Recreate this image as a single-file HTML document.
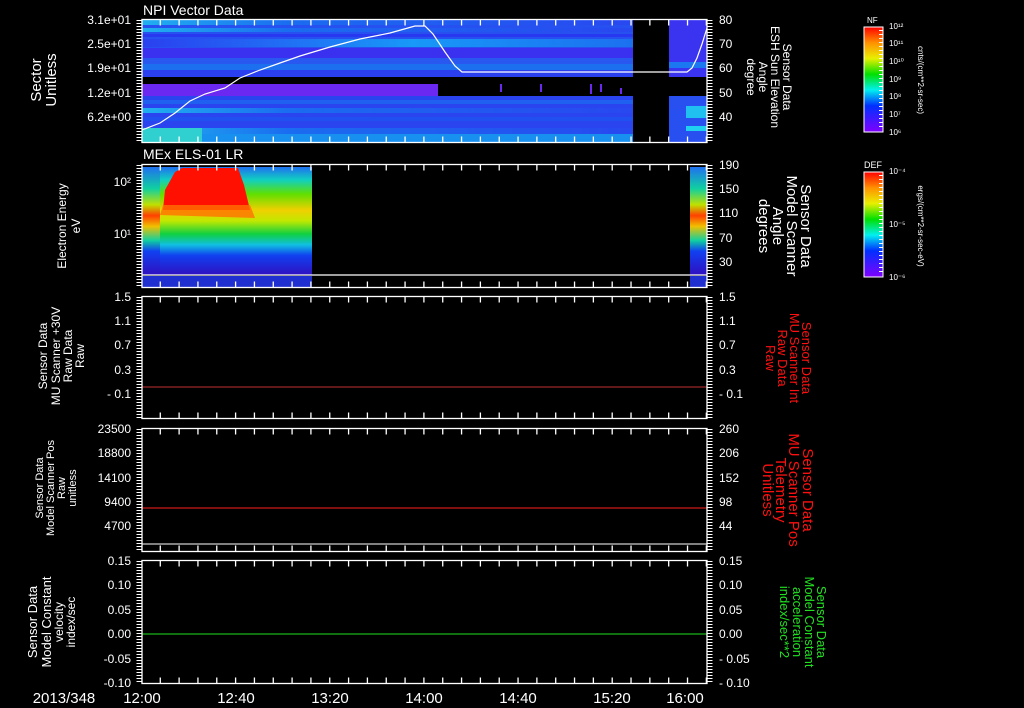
<!DOCTYPE html>
<html><head><meta charset="utf-8"><style>
html,body{margin:0;padding:0;background:#000;width:1024px;height:708px;overflow:hidden}
svg{display:block}
text{font-family:"Liberation Sans",sans-serif;fill:#fff}
</style></head><body>
<svg width="1024" height="708" viewBox="0 0 1024 708" xmlns="http://www.w3.org/2000/svg">
<defs>
<linearGradient id="rb" x1="0" y1="0" x2="0" y2="1">
<stop offset="0" stop-color="#ff0000"/><stop offset="0.15" stop-color="#ff9000"/><stop offset="0.3" stop-color="#e8f000"/><stop offset="0.45" stop-color="#00e000"/><stop offset="0.6" stop-color="#00f0f0"/><stop offset="0.75" stop-color="#0030ff"/><stop offset="1" stop-color="#8000ff"/>
</linearGradient>
<linearGradient id="p1a" x1="0" y1="0" x2="1" y2="0">
<stop offset="0" stop-color="#20b0f0"/><stop offset="0.3" stop-color="#1a6cf0"/><stop offset="1" stop-color="#2848f0"/>
</linearGradient>
<linearGradient id="p1c" x1="0" y1="0" x2="1" y2="0">
<stop offset="0" stop-color="#2a40f0"/><stop offset="0.55" stop-color="#1898f8"/><stop offset="1" stop-color="#1c70f0"/>
</linearGradient>
<linearGradient id="p2" x1="0" y1="0" x2="0" y2="1">
<stop offset="0" stop-color="#2070f0"/><stop offset="0.12" stop-color="#10d0c0"/><stop offset="0.25" stop-color="#60e000"/><stop offset="0.4" stop-color="#f0d000"/><stop offset="0.5" stop-color="#c0e800"/><stop offset="0.62" stop-color="#10d040"/><stop offset="0.72" stop-color="#10c0e0"/><stop offset="0.82" stop-color="#1040f0"/><stop offset="1" stop-color="#3010c0"/>
</linearGradient>
<linearGradient id="p2r" x1="0" y1="0" x2="0" y2="1">
<stop offset="0" stop-color="#2070f0"/><stop offset="0.2" stop-color="#10d0a0"/><stop offset="0.35" stop-color="#c0e000"/><stop offset="0.45" stop-color="#ff4000"/><stop offset="0.55" stop-color="#f0c000"/><stop offset="0.68" stop-color="#10d0a0"/><stop offset="0.78" stop-color="#1040f0"/><stop offset="1" stop-color="#3010c0"/>
</linearGradient>
</defs>

<!-- Panel 1 data -->
<g>
<rect x="142" y="20" width="491" height="57" fill="#2650f0"/>
<rect x="142" y="20" width="491" height="5" fill="url(#p1a)"/>
<rect x="142" y="28" width="491" height="4" fill="url(#p1a)"/>
<rect x="142" y="34" width="491" height="3" fill="#2838f0"/>
<rect x="142" y="39" width="491" height="8" fill="url(#p1c)"/>
<rect x="142" y="48" width="491" height="10" fill="#3a30f0"/>
<rect x="142" y="58" width="491" height="6" fill="#2858f0"/>
<rect x="142" y="64" width="491" height="6" fill="#1c70f0"/>
<rect x="142" y="70" width="491" height="7" fill="#2a40f0"/>
<rect x="142" y="84" width="296" height="12" fill="#6a28f0"/>
<rect x="142" y="96" width="491" height="46" fill="#2a44f0"/>
<rect x="142" y="100" width="491" height="4" fill="#2060f0"/>
<rect x="142" y="108" width="491" height="5" fill="url(#p1a)"/>
<rect x="142" y="117" width="491" height="4" fill="#2050f0"/>
<rect x="142" y="128" width="491" height="6" fill="url(#p1a)"/>
<rect x="142" y="134" width="491" height="8" fill="#1890f0"/>
<rect x="142" y="128" width="60" height="14" fill="#30d0d0"/>
<g fill="#6a28f0"><rect x="500" y="84" width="2" height="8"/><rect x="540" y="84" width="2" height="8"/><rect x="590" y="84" width="2" height="10"/><rect x="600" y="84" width="2" height="8"/><rect x="620" y="88" width="2" height="6"/></g>
<rect x="669" y="20" width="38" height="57" fill="#3a34f0"/>
<rect x="669" y="62" width="38" height="6" fill="#1c78f0"/>
<rect x="669" y="96" width="38" height="46" fill="#2850f0"/>
<rect x="686" y="106" width="21" height="12" fill="#20c0f0"/>
<rect x="686" y="126" width="21" height="5" fill="#20d0f0"/>
<polyline fill="none" stroke="#fff" stroke-width="1.2" points="142,130 160,123 175,113 190,101 205,94 225,88 240,78 260,70 280,63 300,56 330,47 360,39 390,33 415,26 425,26 433,34 445,52 455,66 462,72 687,72 692,68 697,58 702,44 707,28"/>
</g>

<!-- Panel 2 data -->
<rect x="142" y="167" width="170" height="108" fill="url(#p2)"/>
<rect x="142" y="167" width="18" height="108" fill="url(#p2r)"/>
<path d="M163,210 L165,190 L175,172 L182,168 L238,168 L244,185 L250,210 Z" fill="#ff1000"/>
<path d="M160,215 L163,205 L250,205 L255,218 Z" fill="#ff7000" opacity="0.8"/>
<rect x="142" y="276" width="170" height="11" fill="#2030d0"/>
<rect x="690" y="167" width="17" height="108" fill="url(#p2r)"/>
<rect x="690" y="276" width="17" height="11" fill="#2030d0"/>
<line x1="142" y1="275" x2="707" y2="275" stroke="#fff" stroke-width="1.2"/>

<!-- data lines -->
<line x1="142" y1="387" x2="707" y2="387" stroke="#c03030" stroke-width="1"/>
<line x1="142" y1="508" x2="707" y2="508" stroke="#ff2020" stroke-width="1"/>
<line x1="142" y1="634" x2="707" y2="634" stroke="#20e020" stroke-width="1"/>
<line x1="142" y1="544" x2="707" y2="544" stroke="#fff" stroke-width="1"/>

<!-- frames -->
<g fill="none" stroke="#fff" stroke-width="1.3">
<rect x="142" y="19.5" width="565" height="123"/>
<rect x="142" y="164.5" width="565" height="123"/>
<rect x="142" y="296.5" width="565" height="122"/>
<rect x="142" y="428.5" width="565" height="123"/>
<rect x="142" y="560.5" width="565" height="123"/>
</g>
<!-- time ticks -->
<g stroke="#fff" stroke-width="1.3" stroke-dasharray="1.3 17.53" stroke-dashoffset="0.6">
<line x1="141.4" y1="22.5" x2="707.5" y2="22.5" stroke-width="6"/><line x1="141.4" y1="139.5" x2="707.5" y2="139.5" stroke-width="6"/>
<line x1="141.4" y1="167.5" x2="707.5" y2="167.5" stroke-width="6"/><line x1="141.4" y1="284.5" x2="707.5" y2="284.5" stroke-width="6"/>
<line x1="141.4" y1="299.5" x2="707.5" y2="299.5" stroke-width="6"/><line x1="141.4" y1="415.5" x2="707.5" y2="415.5" stroke-width="6"/>
<line x1="141.4" y1="431.5" x2="707.5" y2="431.5" stroke-width="6"/><line x1="141.4" y1="548.5" x2="707.5" y2="548.5" stroke-width="6"/>
<line x1="141.4" y1="563.5" x2="707.5" y2="563.5" stroke-width="6"/><line x1="141.4" y1="680.5" x2="707.5" y2="680.5" stroke-width="6"/>
</g>
<!-- y minor ticks -->
<g stroke="#fff" stroke-width="5" stroke-dasharray="1 2">
<line x1="139" y1="20" x2="139" y2="142"/><line x1="710" y1="20" x2="710" y2="142"/>
<line x1="139" y1="165" x2="139" y2="287"/><line x1="710" y1="165" x2="710" y2="287"/>
<line x1="139" y1="297" x2="139" y2="418"/><line x1="710" y1="297" x2="710" y2="418"/>
<line x1="139" y1="429" x2="139" y2="551"/><line x1="710" y1="429" x2="710" y2="551"/>
<line x1="139" y1="561" x2="139" y2="683"/><line x1="710" y1="561" x2="710" y2="683"/>
</g>

<!-- titles -->
<text x="143" y="15" font-size="14">NPI Vector Data</text>
<text x="143" y="159" font-size="14">MEx ELS-01 LR</text>

<!-- left tick labels -->
<g font-size="12" text-anchor="end">
<text x="131" y="24">3.1e+01</text><text x="131" y="48">2.5e+01</text><text x="131" y="72">1.9e+01</text><text x="131" y="97">1.2e+01</text><text x="131" y="121">6.2e+00</text>
<text x="131" y="186">10²</text><text x="131" y="238">10¹</text>
<text x="131" y="301">1.5</text><text x="131" y="325">1.1</text><text x="131" y="349">0.7</text><text x="131" y="374">0.3</text><text x="131" y="398">- 0.1</text>
<text x="131" y="433">23500</text><text x="131" y="457">18800</text><text x="131" y="482">14100</text><text x="131" y="506">9400</text><text x="131" y="530">4700</text>
<text x="131" y="565">0.15</text><text x="131" y="589">0.10</text><text x="131" y="614">0.05</text><text x="131" y="638">0.00</text><text x="131" y="663">-0.05</text><text x="131" y="687">-0.10</text>
</g>
<!-- right tick labels -->
<g font-size="12">
<text x="719" y="24">80</text><text x="719" y="48">70</text><text x="719" y="72">60</text><text x="719" y="97">50</text><text x="719" y="121">40</text>
<text x="719" y="169">190</text><text x="719" y="193">150</text><text x="719" y="217">110</text><text x="719" y="242">70</text><text x="719" y="266">30</text>
<text x="719" y="301">1.5</text><text x="719" y="325">1.1</text><text x="719" y="349">0.7</text><text x="719" y="374">0.3</text><text x="719" y="398">- 0.1</text>
<text x="719" y="433">260</text><text x="719" y="457">206</text><text x="719" y="482">152</text><text x="719" y="506">98</text><text x="719" y="530">44</text>
<text x="719" y="565">0.15</text><text x="719" y="589">0.10</text><text x="719" y="614">0.05</text><text x="719" y="638">0.00</text><text x="719" y="663">- 0.05</text><text x="719" y="687">- 0.10</text>
</g>
<!-- time labels -->
<g font-size="15" text-anchor="middle">
<text x="64" y="703">2013/348</text><text x="142" y="703">12:00</text><text x="236" y="703">12:40</text><text x="330" y="703">13:20</text><text x="424" y="703">14:00</text><text x="518" y="703">14:40</text><text x="612" y="703">15:20</text><text x="685" y="703">16:00</text>
</g>

<!-- left axis titles -->
<g text-anchor="middle">
<text transform="translate(41,80) rotate(-90)" font-size="15">Sector</text>
<text transform="translate(56,80) rotate(-90)" font-size="15">Unitless</text>
<text transform="translate(66,226) rotate(-90)" font-size="12">Electron Energy</text>
<text transform="translate(80,226) rotate(-90)" font-size="12">eV</text>
<text transform="translate(47,356) rotate(-90)" font-size="12">Sensor Data</text>
<text transform="translate(60,356) rotate(-90)" font-size="12">MU Scanner +30V</text>
<text transform="translate(72,356) rotate(-90)" font-size="12">Raw Data</text>
<text transform="translate(84,356) rotate(-90)" font-size="12">Raw</text>
<text transform="translate(43,488) rotate(-90)" font-size="11">Sensor Data</text>
<text transform="translate(54,488) rotate(-90)" font-size="11">Model Scanner Pos</text>
<text transform="translate(65,488) rotate(-90)" font-size="11">Raw</text>
<text transform="translate(76,488) rotate(-90)" font-size="11">unitless</text>
<text transform="translate(37,622) rotate(-90)" font-size="13">Sensor Data</text>
<text transform="translate(51,622) rotate(-90)" font-size="13">Model Constant</text>
<text transform="translate(63,622) rotate(-90)" font-size="12">velocity</text>
<text transform="translate(75,622) rotate(-90)" font-size="12">index/sec</text>
</g>
<!-- right axis titles -->
<g text-anchor="middle">
<text transform="translate(783,77) rotate(90)" font-size="12">Sensor Data</text>
<text transform="translate(771,77) rotate(90)" font-size="12">ESH Sun Elevation</text>
<text transform="translate(759,77) rotate(90)" font-size="12">Angle</text>
<text transform="translate(747,77) rotate(90)" font-size="12">degree</text>
</g>
<g text-anchor="middle">
<text transform="translate(801,226) rotate(90)" font-size="15">Sensor Data</text>
<text transform="translate(787,226) rotate(90)" font-size="15">Model Scanner</text>
<text transform="translate(773,226) rotate(90)" font-size="15">Angle</text>
<text transform="translate(759,226) rotate(90)" font-size="15">degrees</text>
</g>
<g text-anchor="middle">
<text transform="translate(802,358) rotate(90)" font-size="13" style="fill:#ff1010">Sensor Data</text>
<text transform="translate(790,358) rotate(90)" font-size="13" style="fill:#ff1010">MU Scanner Int</text>
<text transform="translate(778,358) rotate(90)" font-size="13" style="fill:#ff1010">Raw Data</text>
<text transform="translate(766,358) rotate(90)" font-size="13" style="fill:#ff1010">Raw</text>
<text transform="translate(803,490) rotate(90)" font-size="15" style="fill:#ff1010">Sensor Data</text>
<text transform="translate(789,490) rotate(90)" font-size="15" style="fill:#ff1010">MU Scanner Pos</text>
<text transform="translate(776,490) rotate(90)" font-size="15" style="fill:#ff1010">Telemetry</text>
<text transform="translate(763,490) rotate(90)" font-size="15" style="fill:#ff1010">Unitless</text>
<text transform="translate(817,622) rotate(90)" font-size="13" style="fill:#20e020">Sensor Data</text>
<text transform="translate(805,622) rotate(90)" font-size="13" style="fill:#20e020">Model Constant</text>
<text transform="translate(793,622) rotate(90)" font-size="13" style="fill:#20e020">acceleration</text>
<text transform="translate(780,622) rotate(90)" font-size="13" style="fill:#20e020">index/sec**2</text>
</g>

<!-- colorbars -->
<rect x="864" y="27" width="19" height="105" fill="url(#rb)" stroke="#fff" stroke-width="1"/>
<rect x="864" y="172" width="19" height="105" fill="url(#rb)" stroke="#fff" stroke-width="1"/>
<g stroke="#fff" stroke-width="4" stroke-dasharray="1 3"><line x1="881" y1="30" x2="881" y2="130"/><line x1="881" y1="175" x2="881" y2="275"/></g>
<text x="867" y="23" font-size="8">NF</text>
<text x="864" y="168" font-size="9">DEF</text>
<g font-size="8">
<text x="889" y="29">10¹²</text><text x="889" y="46">10¹¹</text><text x="889" y="64">10¹⁰</text><text x="889" y="82">10⁹</text><text x="889" y="99">10⁸</text><text x="889" y="117">10⁷</text><text x="889" y="135">10⁶</text>
<text x="889" y="174">10⁻⁴</text><text x="889" y="227">10⁻⁵</text><text x="889" y="280">10⁻⁶</text>
</g>
<text transform="translate(918,80) rotate(90)" font-size="8" text-anchor="middle">cnts/(cm**2-sr-sec)</text>
<text transform="translate(918,226) rotate(90)" font-size="8" text-anchor="middle">ergs/(cm**2-sr-sec-eV)</text>
</svg>
</body></html>
